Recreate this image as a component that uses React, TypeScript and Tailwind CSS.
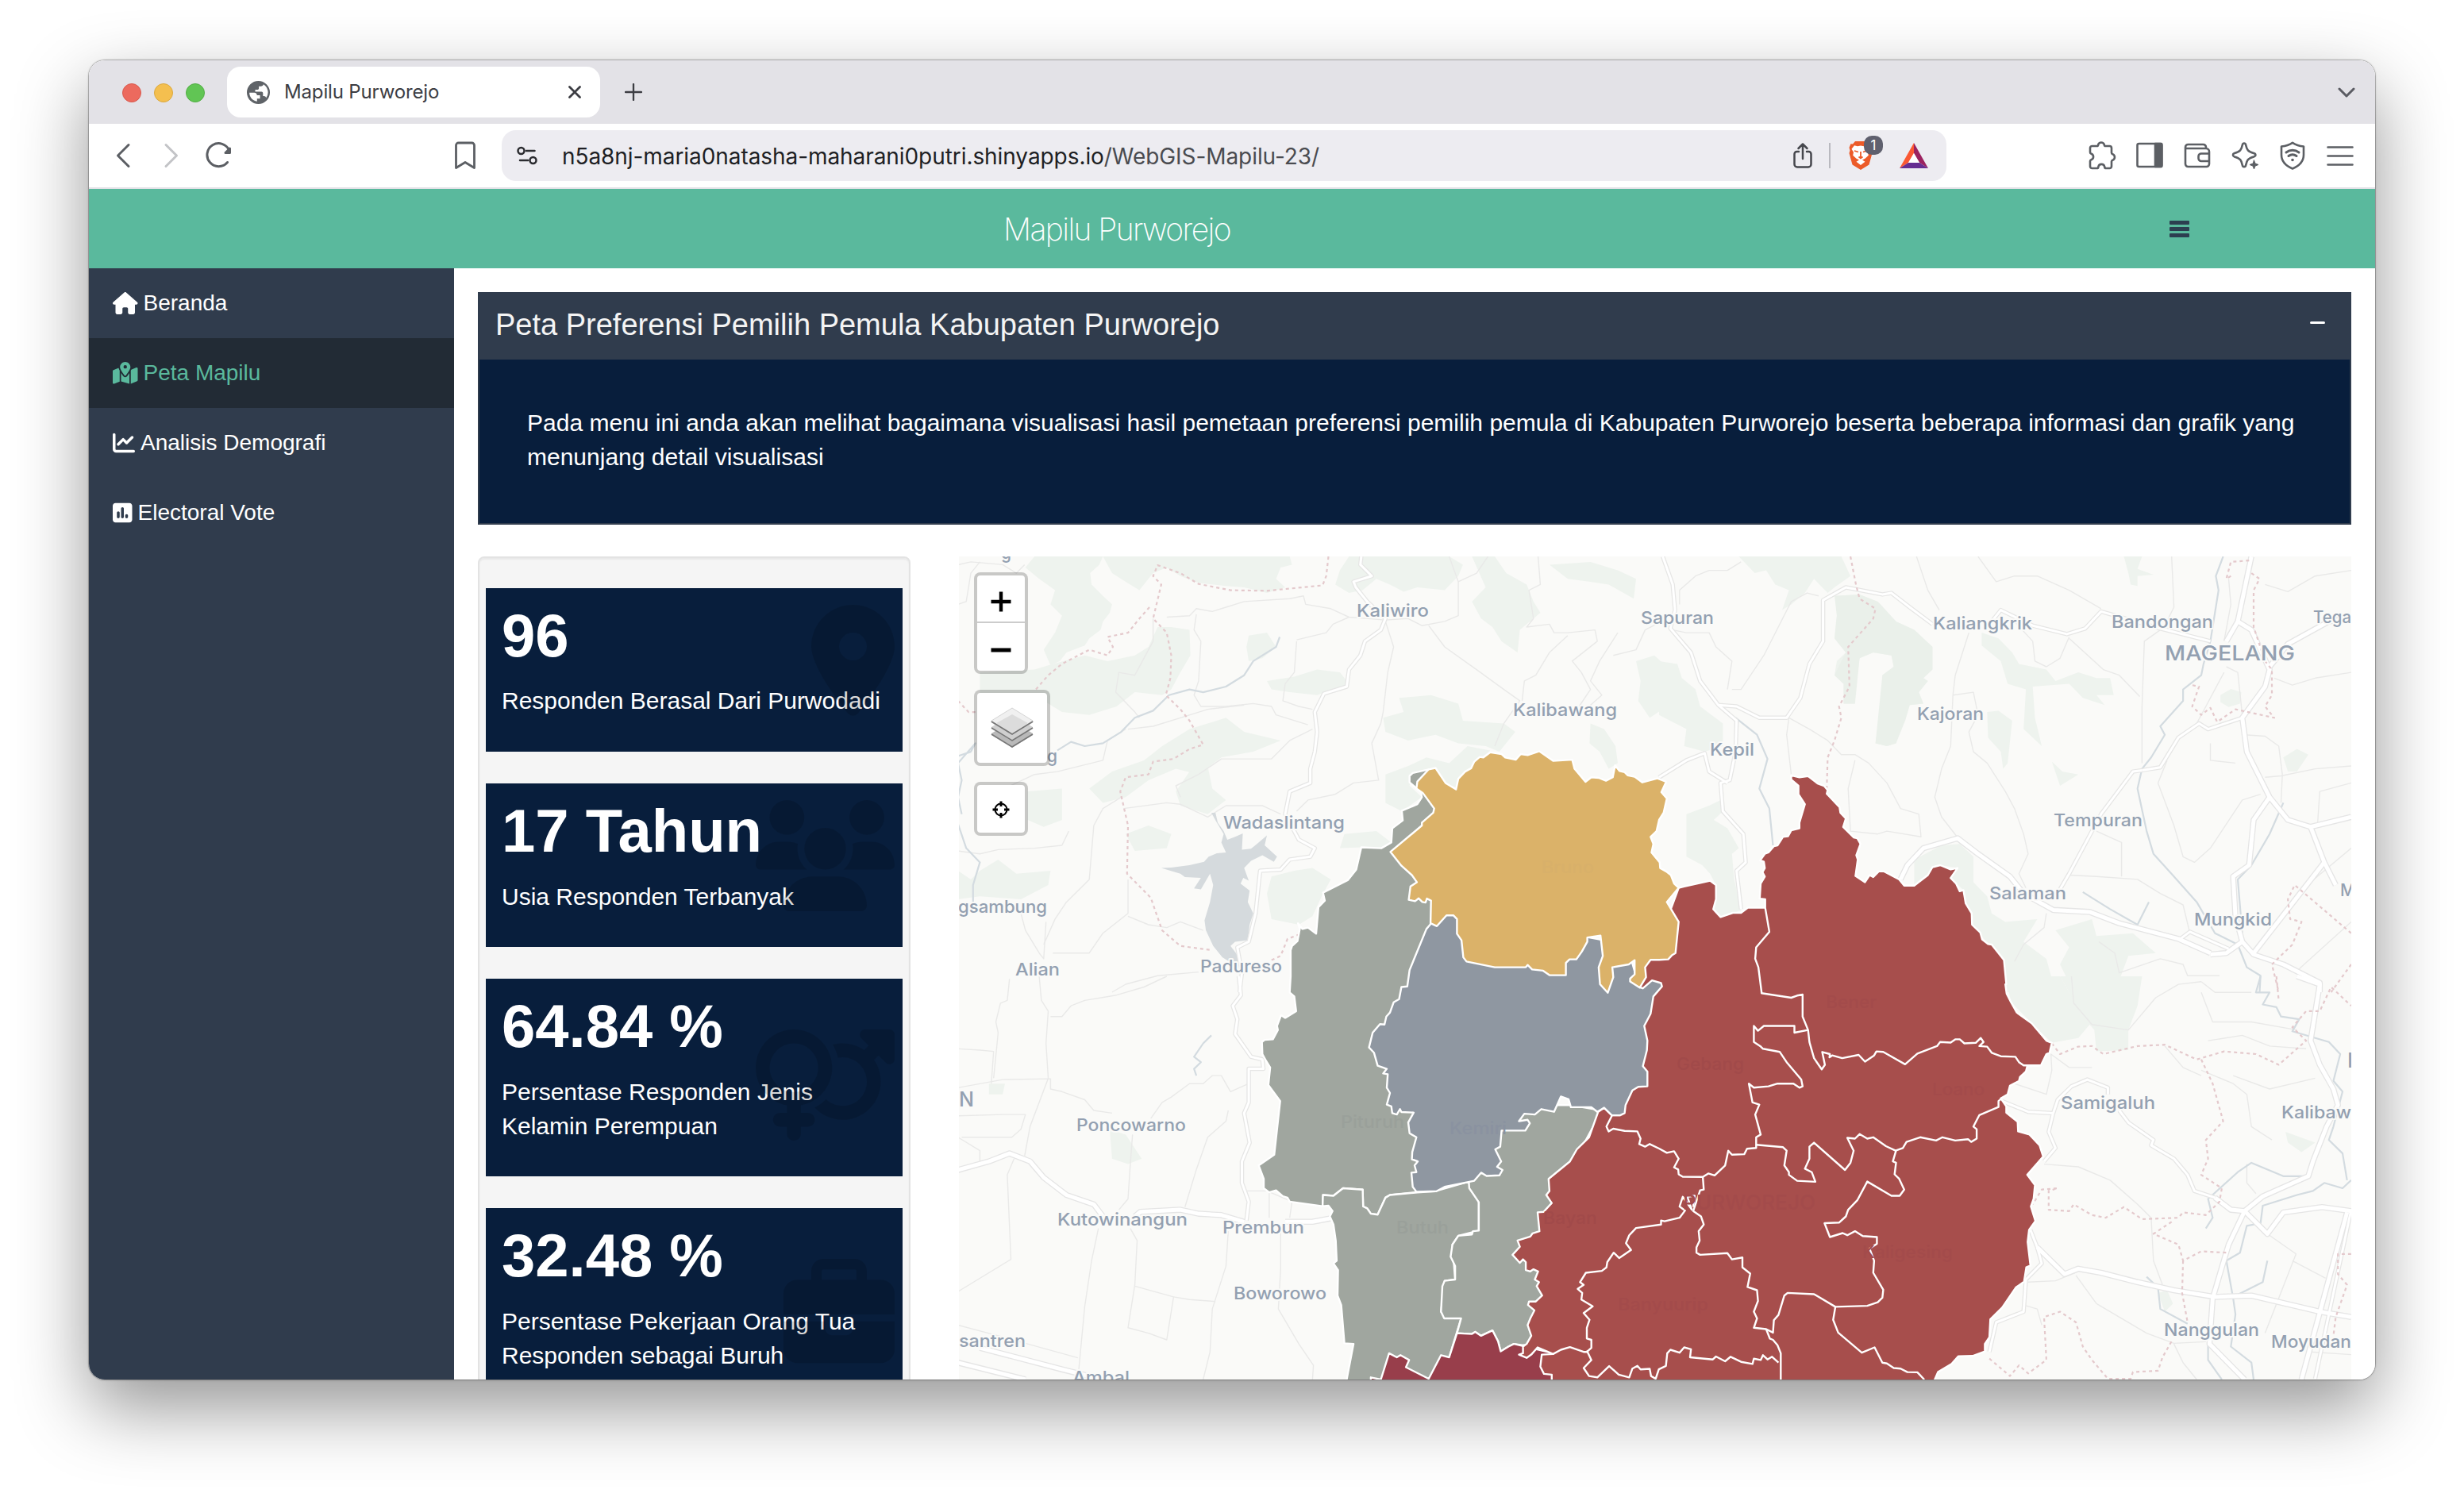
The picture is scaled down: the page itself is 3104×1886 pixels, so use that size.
import React from "react";
import { FaHouse, FaMapLocationDot, FaChartLine, FaSquarePollVertical, FaLocationDot, FaUsers, FaVenusMars, FaBriefcase } from "react-icons/fa6";

/* ---------- map geometry ---------- */

// Each sheet of the map has its own origin and unit size.
const SHEETS: Record<string, [number, number, number, number]> = {
  a: [1200, 690, 900 / 1568, 560 / 1568],
  b: [2090, 690, 900 / 1568, 560 / 1568],
  c: [1200, 1230, 900 / 1568, 530 / 1568],
  d: [2090, 1230, 900 / 1568, 530 / 1568],
};

function pts(src: string): string {
  let s = SHEETS.a;
  const out: string[] = [];
  for (const tok of src.trim().split(/\s+/)) {
    if (SHEETS[tok]) {
      s = SHEETS[tok];
      continue;
    }
    const [x, y] = tok.split(",").map(Number);
    out.push(`${(s[0] + x * s[2]).toFixed(1)},${(s[1] + y * s[3]).toFixed(1)}`);
  }
  return out.join(" ");
}

const FOREST = [
  "a 180,31 330,31 322,60 302,90 305,130 330,170 350,200 345,230 330,260 325,290 300,320 290,345 250,370 235,400 215,415 200,360 225,300 240,240 215,200 225,150 190,110 160,70",
  "a 330,31 740,31 745,60 720,70 710,110 730,140 690,160 640,140 600,135 540,125 500,100 470,70 440,90 410,150 380,120 350,90",
  "a 870,31 1090,31 1120,60 1110,100 1080,150 1020,140 990,155 960,130 930,110 900,150 870,160 840,130 850,80",
  "a 1140,31 1190,31 1215,90 1260,130 1275,190 1290,230 1245,290 1240,370 1205,330 1185,280 1160,250 1140,190 1170,140",
  "a 1310,60 1400,50 1460,80 1500,110 1495,180 1440,130 1400,120 1350,110",
  "a 480,280 520,290 522,380 500,440 480,500 460,520 400,510 360,560 300,590 240,580 180,520 60,520 60,440 180,430 220,410 290,380 340,400 400,380 430,350 450,280",
  "a 650,310 690,300 710,350 680,390 650,400 645,350",
  "a 690,470 750,455 800,430 850,440 870,480 800,520 740,510 700,500",
  "a 520,640 600,600 640,650 720,680 660,720 590,740 540,800 490,780 430,820 380,880 330,900 300,850 350,790 420,750 460,700",
  "a 520,790 560,770 570,850 600,890 560,940 500,910 490,860",
  "a 980,530 1050,520 1110,550 1120,610 1210,620 1235,650 1200,720 1170,700 1110,690 1060,660 1000,680 950,650 945,600 990,580",
  "a 950,800 1000,770 1040,740 1090,760 1130,700 1180,715 1140,770 1110,850 1080,830 1058,777 1010,800 1003,840 1030,880 986,930 950,900",
  "a 1400,620 1430,640 1455,700 1460,760 1440,780 1420,720 1398,690",
  "a 1500,400 1540,380 1568,420 1568,560 1530,600 1505,540 1510,470",
  "a 165,860 240,850 240,960 200,985 165,960",
  "a 380,1010 430,980 480,1010 470,1060 400,1070",
  "a 60,1140 100,1100 140,1150 215,1140 210,1190 150,1240 60,1230 12,1240 12,1140 40,1170",
  "a 700,1160 750,1140 790,1130 830,1170 810,1230 790,1300 760,1330 700,1310 690,1220",
  "a 860,1010 930,1000 963,1040 941,1060 897,1057 850,1060",
  "b 175,31 400,31 420,100 385,140 370,160 340,110 320,160 290,200 270,220 285,150 255,130 235,80 210,90",
  "b 385,170 440,165 480,190 520,260 560,290 600,350 600,430 580,460 590,470 570,510 580,550 550,555 540,610 520,640 520,690 500,700 475,690 480,640 500,600 490,450 515,420 510,380 470,370 440,390 430,500 430,550 405,550 405,480 385,450 390,400 410,370 385,320 390,240 410,220",
  "b 708,300 745,320 775,370 790,410 850,430 870,470 920,440 960,460 990,460 998,520 960,520 978,555 930,530 900,480 820,490 825,600 840,700 820,670 800,640 805,500 765,480 750,400 708,345",
  "b 720,580 745,575 775,610 765,760 755,780 750,720 722,670",
  "b 862,755 885,790 920,800 880,840",
  "b 1020,31 1060,31 1050,75 1085,95 1050,100 1050,135 1035,130 1030,90",
  "b 1232,520 1255,498 1278,510 1275,550 1250,562 1232,545",
  "b 0,400 40,410 50,460 80,500 90,560 140,620 140,700 100,720 55,700 60,640 0,590",
  "b 60,940 110,910 135,890 140,930 120,960 150,990 175,1060 160,1080 165,1170 180,1280 135,1303 119,1275 125,1190 112,1150 95,1120 60,1090",
  "b 560,1100 620,1050 660,1045 690,1090 690,1180 720,1230 730,1290 760,1320 830,1310 800,1390 850,1450 870,1568 762,1568 757,1455 722,1398 687,1330 668,1208 640,1165 655,1130 617,1120 590,1155 560,1190",
  "b 870,1350 950,1310 960,1370 1040,1360 1090,1430 1030,1440 1000,1568 910,1568 880,1470 900,1410",
  "d 762,0 880,0 900,60 940,140 950,170 920,230 862,248 818,175 772,95",
  "d 880,0 1060,0 1050,110 1030,200 1030,275 960,280 955,200 930,150 900,60",
  "d 1375,580 1440,620 1410,655 1380,620",
  "d 1095,1180 1115,1170 1128,1220 1110,1250",
  "b 1370,740 1400,710 1425,730 1400,790 1380,790",
  "c 345,570 380,590 415,680 385,700 350,680",
  "c 80,400 115,400 110,440 80,440",
];

const MINOR = [
  "a 12,60 40,50 110,60 140,90 158,60",
  "a 12,200 30,190 40,90 60,50",
  "a 470,245 520,240 535,215 570,225 600,210 640,190 740,180 770,170 775,200 830,215 870,245 950,255",
  "a 535,235 530,290 545,330 540,470 530,520 545,560 600,560 660,550 700,560 710,590 780,625",
  "a 440,250 440,330 400,450 365,440 358,510 400,580 410,600",
  "a 385,640 440,630 500,600 560,570 640,555",
  "a 950,260 968,350 955,440 945,580 940,620 920,690 935,820 880,830 840,870 780,890 755,930",
  "a 1045,275 1080,350 1150,430 1210,500 1245,540 1210,620 1190,700",
  "a 950,255 1000,250 1030,275 1080,260 1110,240 1110,120 1090,31",
  "a 755,330 750,440 730,480 725,540 760,560 790,570",
  "a 755,325 820,300 835,270 870,245",
  "a 1110,120 1150,90 1175,31",
  "a 1285,31 1290,130 1265,150 1275,250 1260,280 1310,270 1320,300 1350,300 1410,290 1415,330 1360,400 1380,440 1400,500 1375,560",
  "a 1250,540 1255,470 1280,450 1310,370 1350,310",
  "a 1460,300 1420,400 1400,470 1425,520 1390,570",
  "a 1568,250 1520,290 1500,360 1450,380",
  "a 375,920 470,900 500,905 560,950 600,910 680,910 720,940",
  "a 12,1070 60,1080 100,1065 180,1060 240,1050 255,1000",
  "a 370,880 330,920 310,980 300,1170 250,1250 225,1310 200,1400",
  "a 150,1290 160,1350 190,1430 200,1450 205,1320",
  "a 385,1170 385,1290 330,1360 300,1430 220,1430",
  "a 385,1300 430,1330 470,1340 500,1320 550,1350",
  "a 60,890 180,800 230,790 330,750 340,680 380,640",
  "a 500,880 490,840 540,800 590,745 650,745 700,745 740,680 790,640",
  "a 350,1568 380,1540 450,1510 540,1497",
  "c 12,270 60,275 90,280 85,400",
  "c 90,380 100,210 95,170 105,100 120,90 125,10",
  "c 190,0 195,90 210,130 205,250 210,380 170,560 158,670",
  "c 12,415 110,385 215,382 215,420 240,430 290,460 310,500 350,510",
  "c 215,150 240,150 260,110 290,90 360,70 420,40 470,0",
  "c 12,520 110,515 160,515 150,570 130,600 20,600",
  "c 12,600 60,650 60,695",
  "c 435,530 460,470 480,450 520,400 550,400 570,370 590,370 610,430 650,400",
  "c 395,590 390,700 385,830 365,870",
  "c 135,680 120,740 128,1055 12,1175",
  "c 605,500 600,540 560,600 535,720 510,860",
  "c 320,940 305,1060 290,1230 275,1503",
  "c 390,940 405,985 400,1150 385,1310 430,1330 470,1355 485,1195 400,1155",
  "c 605,950 600,1080 570,1240 565,1400 550,1503",
  "c 485,1195 520,1205 577,1212",
  "c 720,940 720,1090 715,1240 760,1370 792,1450 790,1503",
  "c 12,1300 100,1340 275,1422",
  "c 695,800 695,900",
  "c 645,800 690,800 745,840 740,900",
  "b 160,500 180,500 230,380 290,190 325,160 350,170",
  "b 45,200 45,150 80,100 110,80 150,80 180,50",
  "b 30,290 60,300 110,300 125,350 160,400 150,500",
  "b 565,31 590,150 615,220",
  "b 700,31 740,120 780,100 830,100 900,150 970,215",
  "b 680,300 650,450 645,520 640,700 620,780 605,880 620,950 655,1022",
  "b 645,520 690,510 700,590 680,650 690,720 720,760 760,860 780,920 800,1010 810,1080 790,1150 805,1200",
  "b 780,260 820,330 825,400 850,420 880,390 900,315",
  "b 900,320 975,430 1010,450 1055,525",
  "b 1060,760 1060,560 1065,330 1100,290",
  "b 1125,31 1130,210 1105,290",
  "b 285,600 330,640 370,680 400,730 430,730 460,760 500,830 530,920 570,940 575,1020 500,1000 480,1010 420,1000 415,850 430,750",
  "b 285,600 280,660 290,800",
  "b 960,1000 1015,1040 1015,1160",
  "b 900,1155 960,1160 1050,1170 1100,1220 1150,1260 1165,1360",
  "b 1115,750 1095,830 1130,980 1150,1090 1175,1110 1210,1060 1280,890 1320,870",
  "b 1210,690 1210,750 1265,760",
  "b 1280,600 1285,660 1330,665 1360,700 1368,800 1365,900",
  "b 1330,810 1365,805 1440,780 1519,770",
  "b 1519,830 1450,860 1445,980",
  "b 1519,80 1440,100 1380,155 1330,130",
  "b 1519,440 1440,460 1390,485 1350,460",
  "b 1240,440 1200,560 1180,620",
  "b 1245,420 1270,440 1280,590",
  "b 1250,110 1255,200 1240,330",
  "b 1519,1060 1400,1220",
  "b 1395,1500 1519,1320",
  "b 850,1290 845,1340 800,1400 780,1460",
  "b 965,1390 1000,1430 1010,1500 1100,1450 1150,1470 1160,1510 1230,1510",
  "d 905,0 910,100 950,180 1030,200 1090,80 1140,30 1190,20",
  "d 1190,20 1220,60 1300,60",
  "d 1190,60 1215,170 1300,170 1400,200",
  "d 1205,240 1280,220 1340,260 1420,270",
  "d 1110,260 1150,340 1190,370",
  "d 1190,350 1260,400 1290,440 1300,560 1345,610",
  "d 1260,370 1340,420 1440,380",
  "d 845,700 920,710 990,760 1050,850 1080,900 1085,1060 1105,1150",
  "d 1290,700 1290,770 1310,810",
  "d 1335,960 1398,1035 1330,1330",
  "d 1390,1060 1463,1125",
  "d 915,1115 960,1220 1070,1330 1130,1368 1200,1362",
  "d 810,1140 870,1135 920,1100",
  "d 800,1225 830,1240 840,1300",
  "d 1430,1400 1519,1410",
  "d 1130,1370 1150,1440 1180,1503",
  "d 780,400 850,440 862,350 860,290 900,340 950,340",
];

const MAJOR = [
  "a 897,31 895,60 920,100 880,120 885,140 910,190 950,250 940,290 905,330 895,380 870,430 865,490 815,515 795,580 800,650 795,720 785,780 785,830 740,860 730,940 760,1030 795,1060 785,1090 740,1100 720,1135 675,1140 665,1290 650,1390 625,1410 635,1500 630,1568",
  "c 628,0 633,70 615,110 625,160 620,215 655,300 680,310 682,345 650,345 650,470 640,510 652,620 635,690 635,770 650,840 645,910",
  "b 8,31 30,130 35,220 25,285 70,370 90,470 130,555 170,610 168,720 155,820 135,830 140,930 185,1010 190,1110 170,1140 180,1275",
  "b 130,555 170,560 220,600 280,600 310,530 330,410 360,330 360,185 410,140 490,165 510,160 550,210 600,270",
  "b 0,810 60,750 100,725 110,790 150,830",
  "b 730,260 750,220 820,275 895,305 935,285 970,225 1100,285 1210,330",
  "b 1060,785 1040,790 970,940 900,1150 880,1205",
  "b 1280,600 1205,640 1185,620 1140,670 1100,775 1060,785",
  "b 1140,1385 1165,1355 1250,1415",
  "d 745,460 810,505 865,510 855,580 870,640 845,690",
  "d 865,510 875,460 905,410 940,385 985,415 985,440",
  "d 1010,500 1030,545 1085,610 1080,630 1130,680 1160,740 1175,800 1220,825",
  "d 815,945 830,1010 840,1070 805,1130 800,1250 740,1290 725,1400",
  "d 1519,870 1440,1500",
];

const HIGHWAY = [
  "b 1300,31 1270,260 1245,330",
  "b 1270,260 1300,290 1340,430 1330,490 1280,600 1290,720 1340,880 1380,960 1430,985 1519,950",
  "b 1430,985 1460,1110 1485,1190",
  "b 1340,880 1305,960 1295,1120 1260,1160 1265,1300 1280,1390 1245,1430 1210,1435",
  "b 1460,1110 1305,1430",
  "b 530,1170 545,1120 580,1060 655,1025 700,1080 770,1160 800,1220 865,1278 945,1285 1010,1325 1140,1380 1210,1430",
  "b 1280,1390 1305,1435 1370,1470 1450,1535 1450,1568",
  "b 1519,250 1470,260 1380,340 1340,420",
  "d 1400,0 1450,30 1430,240 1450,330 1480,420 1490,480 1465,560 1435,690 1425,745 1325,820 1285,875 1255,870 1220,825",
  "d 1285,875 1250,1000 1215,1200 1208,1370 1285,1503",
  "d 1285,875 1335,960 1370,880 1455,860 1519,875",
  "d 830,1010 890,1110 920,1090 970,1105 1050,1140 1130,1170 1220,1195 1300,1190 1450,1250 1519,1270",
  "d 1510,880 1410,1503",
  "c 12,722 80,690 125,660 170,690 200,750 250,815 310,850 330,895",
  "c 400,895 412,878 500,870 540,885 590,890 640,915",
  "c 730,915 790,915 830,902",
  "c 12,1440 160,1503",
  "c 60,1385 240,1465 330,1503",
];

const RIVER = [
  "a 718,315 710,350 660,400 640,450 600,490 550,510 520,500 475,520 440,575 400,600 370,650 330,690 290,700 260,685 230,715",
  "a 12,735 40,720 50,690 12,760 20,820 12,880 20,940",
  "a 12,975 30,1060 60,1110 45,1190 45,1250",
  "c 568,220 550,250 530,300 545,320 530,345 535,370",
  "b 168,600 215,660 238,745 220,850 242,920 250,1050",
  "b 1238,31 1222,100 1228,150 1210,330 1195,410 1190,450 1150,500 1150,540 1100,630 1110,660 1080,740 1060,780 1050,850 1070,1000 1085,1080 1130,1160 1180,1250 1220,1360 1270,1400 1290,1480 1320,1510 1318,1568",
  "b 930,1215 950,1235 990,1275 1050,1330 1075,1250",
  "b 1370,900 1340,1010 1300,1120 1270,1170 1280,1360",
  "d 1320,0 1310,60 1340,60 1325,105 1355,115 1365,150 1405,160 1390,205 1470,245 1495,290 1480,390 1500,430 1480,560 1470,610 1500,660 1510,760",
  "d 1519,760 1500,790 1460,770 1435,800 1400,815 1325,855 1320,920 1290,930 1275,1030 1245,1060 1260,1200 1265,1260 1255,1380 1300,1440 1305,1503",
  "d 1200,940 1215,900 1205,830 1270,730 1300,695 1370,745 1420,745",
  "d 1335,1060 1325,1140 1260,1195",
  "d 1070,1120 1095,1160 1100,1240 1160,1295",
  "d 1205,1370 1205,1430 1235,1503",
];

const BORDER = [
  "a 825,31 820,100 812,133 690,152 610,150 540,128 500,90 450,62 440,100 458,130 440,250 470,300 480,380 478,460 468,520 500,570 520,610 550,695 520,710 485,745 440,755 430,800 380,810 368,860 385,980 383,1150 435,1235 460,1350 500,1405 570,1420",
  "a 432,210 410,250 385,300 340,315 352,350 340,380 300,360 240,410 210,450 180,505",
  "a 12,540 35,580 60,580",
  "a 700,1455 720,1440 735,1380 760,1365",
  "b 420,31 432,130 440,180 475,215 470,250 415,350 418,490 395,560 400,600 385,680 370,740 368,850",
  "b 1295,45 1255,50 1245,110 1260,95",
  "b 1300,90 1318,110 1305,150 1305,280 1330,400 1345,430 1345,520 1330,560 1350,600 1265,570 1225,615 1210,565 1190,590 1170,560 1185,490 1170,485",
  "b 1519,1360 1395,1190 1380,1240 1385,1310 1410,1320 1390,1400 1345,1470 1360,1568",
  "b 1519,1470 1475,1568",
  "d 862,250 880,290 920,262 950,260 975,290 1050,260 1110,255 1180,310 1240,280 1310,290 1360,330 1420,240 1390,190 1420,130 1450,130 1475,40 1519,110",
  "d 1355,0 1360,90",
  "d 1190,310 1215,400 1238,540 1200,610 1205,680 1190,740 1235,790 1230,840 1200,890 1150,880 1140,900 1060,905 1020,860 980,900 950,890 910,850 900,875 855,870 855,800 875,790 840,795 820,850",
  "d 1125,915 1085,960 1140,1000 1150,1060 1190,1025 1245,1030",
  "d 1150,1060 1148,1180 1160,1290",
  "d 1519,1035 1490,1035 1490,1110 1510,1150 1485,1270 1480,1340",
  "d 725,1425 770,1490 790,1450 810,1480 850,1430 845,1270 880,1250 915,1290 930,1380 950,1430 985,1500 1035,1500 1040,1475 1095,1470 1105,1420 1125,1360",
];

const LAKE = "a 568,935 577,935 582,970 595,1000 603,1030 620,1020 637,1008 635,1065 655,1062 668,1045 690,1015 685,1050 712,1090 705,1108 680,1085 655,1105 640,1130 650,1175 638,1165 632,1185 652,1210 648,1250 660,1290 652,1330 648,1385 620,1390 610,1405 622,1430 633,1460 610,1463 592,1445 572,1405 556,1350 553,1315 565,1250 572,1190 565,1150 545,1205 530,1202 545,1165 510,1162 500,1150 478,1140 458,1130 480,1128 520,1120 552,1108 562,1090 580,1078 600,1075 590,1040 595,1010 578,965";

const RED = `b 43,1200 55,1195 112,1175 125,1190 125,1240 119,1275 135,1303 162,1288 180,1288 195,1270 233,1270
233,1240 221,1238 223,1185 232,1160 227,1145 232,1130 230,1108 222,1103 232,1080 240,1075 252,1053 260,1050 272,1020 283,1018 290,997 308,990 308,970 320,905 306,870 306,840 290,818 290,803 308,810 327,806 348,832 362,840 370,855 368,868 396,915 398,935 410,955 404,985 427,1022 435,1025 442,1045 433,1085 436,1100 431,1158 452,1180 462,1155 470,1162 482,1142 494,1142 527,1170 538,1192 560,1192 590,1155 600,1127 617,1120 640,1135 655,1130 640,1165 652,1185 660,1212 668,1208 673,1255 686,1290 687,1330 705,1358 709,1382 722,1398 730,1400 757,1455 762,1540
d 760,30 763,65 772,95 785,135 818,175 850,240 862,248 857,285 850,290 838,332 808,335 805,355 792,375 790,390 770,408 765,440 750,455 762,485 762,508 787,542 788,578 813,590 835,630 843,672 808,740 825,778 822,830 816,858 826,912 812,945 809,990 815,1078 806,1085 801,1138 783,1160 753,1235 727,1278 725,1345 715,1370 715,1398 688,1415 657,1416 642,1445 612,1475 605,1503 603,1530
c 1315,1530 1315,1485 1298,1482 1290,1455 1293,1410 1318,1408 1284,1383 1270,1410 1260,1422 1243,1410 1252,1405 1252,1380 1260,1370 1270,1340 1262,1300 1268,1275 1277,1245 1263,1225 1265,1212 1280,1212 1294,1190 1282,1155 1287,1140 1278,1130 1285,1100 1275,1092 1268,1100 1258,1095 1258,1065 1252,1055 1245,1068 1229,1038 1245,1008 1240,985 1268,970 1273,958 1288,950 1284,880 1297,878 1315,845 1303,815 1310,800 1308,755 1355,690 1370,645 1397,600 1417,505 1430,490 1447,518 1465,518 1475,480 1490,300 1500,42 a 1540,1400 b 20,1300`;

const YELLOW = `a 1060,777 1082,830 1105,853 1110,815 1125,790 1138,778 1145,755 1157,738 1165,740 1180,722 1205,728 1213,740 1236,748 1247,728 1262,732 1288,718 1318,752 1360,748 1365,780 1389,826 1402,810 1418,812 1434,822 1449,810 1454,768 1464,788 1475,792 1482,803 1497,808 1514,828 1547,814 1566,826
b 5,862 17,885 10,935 0,960 a 1545,1000 1532,1020 1538,1045 1534,1075 1552,1110 1553,1130 1566,1142 b 26,1155 33,1185 43,1200 17,1250 43,1320 36,1430 28,1438 20,1452 0,1454 a 1532,1454 1520,1480 1522,1515 1508,1552 1487,1530 1487,1520 1497,1505 1497,1455 1484,1470 1448,1480 1450,1515 1438,1570 1421,1540 1418,1480 1427,1440 1422,1368 1393,1375 1393,1390 1381,1425 1369,1452 1354,1452 1346,1465 1346,1508 1310,1508 1296,1492 1272,1488 1262,1472 1258,1480 1190,1480 1128,1460 1121,1445 1117,1385 1107,1362 1107,1310 1099,1297 1084,1297 1063,1335 1049,1325 1050,1245 1041,1238 1038,1252 1031,1250 1023,1237 1015,1247 1001,1242 1005,1195 1019,1180 1008,1155 985,1122 961,1073 1030,980 1030,970 1055,935 1057,920 1032,865 1018,850 1020,825 1045,782`;

const DISTRICTS: { fill: string; d: string }[] = [
  {
    fill: "#a0a69f",
    d: `a 1045,782 1010,795 1003,805 1003,828 1028,862 1030,880 1020,905 986,928 988,962 965,990 963,1040 941,1060 897,1057 886,1135 868,1172 813,1217 817,1245 803,1268 798,1362 780,1340 768,1345 758,1325 762,1345 757,1388 745,1405 742,1420 742,1512
c 742,0 740,60 750,75 754,130 730,155 721,145 712,185 714,200 703,235 685,237 679,245 680,290 688,315 697,340 693,405 719,465 706,665 672,705 683,755 683,790 695,805 710,798 725,820 735,825 740,840 812,857 813,815 836,818 857,790 900,795 901,858 910,865 918,885 933,888 950,825 960,815 1040,801 1040,300 a 1049,1325 1100,1100 1060,850`,
  },
  {
    fill: "#a0a69f",
    d: `c 812,857 825,855 834,875 828,895 836,925 841,985 843,1060 836,1070 846,1095 845,1190 853,1225 860,1368 880,1370 865,1503 862,1520 1040,1520 1090,1420 1116,1275 1072,1250 1080,1135 1103,1130 1097,1000 1110,967 1155,948 1155,842 1133,765 1060,801 1020,806 960,815 950,825 933,888 918,885 910,865 901,858 900,795 857,790 836,818 813,815`,
  },
  {
    fill: "#a0a69f",
    d: `c 1133,765 1134,790 1155,842 1155,948 1142,950 1140,962 1110,967 1097,1000 1093,1045 1103,1080 1103,1130 1080,1135 1075,1155 1072,1250 1079,1275 1116,1275 1107,1330 1140,1333 1147,1325 1160,1340 1185,1320 1197,1360 1203,1398 1220,1380 1232,1370 1250,1375 1300,1370 1330,1200 1330,800 1425,500 1357,480 1280,480 1190,560 1160,700`,
  },
  {
    fill: "#983e4b",
    d: `c 918,1520 918,1495 940,1503 958,1405 975,1420 983,1412 1002,1430 995,1457 1045,1500 1072,1412 1090,1420 1107,1330 1140,1333 1147,1325 1160,1340 1185,1320 1197,1360 1203,1398 1220,1380 1232,1370 1258,1380 1330,1410 1330,1520`,
  },
  { fill: "#a74e4c", d: RED },
  {
    fill: "#8f97a1",
    d: `c 1018,803 1010,785 1007,732 1018,730 1014,705 1021,690 1008,682 1009,655 1018,600 1003,585 1000,545 1012,508 985,506 982,495 975,515 965,510 963,485 953,478 960,435 953,415 955,365 945,362 953,345 933,333 925,285 914,265 922,210 938,178 948,180 952,150 960,135 968,97 980,85 985,40 998,38 1001,0 a 1003,1490 1040,1345 1048,1330 1080,1280 1480,1400 1507,1550 c 1515,45 1535,15 1555,25 1557,38 1538,75 1532,140 1518,185 1525,240 1524,275 1515,335 1525,355 1525,410 1505,412 1492,425 1477,480 1475,510 1465,518 1447,518 1430,490 1415,505 1402,488 1357,488 1352,458 1335,448 1320,505 1292,495 1278,515 1255,512 1243,540 1262,535 1267,548 1257,575 1205,575 1202,635 1191,645 1204,690 1195,710 1207,722 1200,742 1172,744 1160,732 1145,762 1080,785 1062,801`,
  },
  { fill: "#dbb269", d: YELLOW },
];

const INNER = [
  "b 233,1270 242,1355 213,1410 211,1450 218,1480 225,1568 d 225,63 290,80 303,72 315,68 315,150 327,200 330,245 340,305 357,347 364,330 358,282 375,290 374,302 380,295 402,305 438,293 452,318 472,295 477,280 492,282 540,328 567,288 610,260 617,245 640,247 650,235 660,235 670,250 695,248 706,230 712,245 703,260 720,262 730,285 750,298 782,300 790,320 800,332 838,332",
  "d 327,200 297,210 297,185 230,185 217,203 208,185 208,245 222,260 228,270 265,282 280,320 312,385 315,410 308,415 295,400 260,400 240,410 208,415 197,400 205,470 220,478 211,515 223,590 213,600 213,640 193,643 187,663 160,665 152,650 145,705 122,742 108,735 96,748 52,747 43,738 42,720 33,712 43,680 33,652 17,658 0,642 c 1530,625 1520,635 1507,625 1510,605 1503,578 1475,576 1450,568 1440,578 1435,560 1447,520",
  "d 213,628 272,637 280,650 275,705 285,730 285,740 303,762 343,766 335,730 320,717 330,680 330,635 340,620 408,722 420,695 427,650 413,602 430,605 440,588 457,605 470,600 498,633 519,650 535,640 543,617 573,600 608,612 622,600 650,612 678,607 685,617 697,605 697,570 690,560 703,517 745,487 745,465 752,455",
  "d 96,748 98,795 90,798 75,875 92,895 98,925 87,950 89,985 82,1010 82,1030 90,1038 150,1032 160,1055 183,1048 183,1085 200,1108 194,1158 215,1170 217,1210 208,1250 215,1275 208,1310 235,1315 250,1328 252,1282 262,1262 275,1190 282,1180 340,1185 387,1232 457,1228 480,1215 490,1198 492,1168 470,1105 472,1060 462,1015 478,997 478,972 447,968 430,950 413,965 403,957 375,972 363,920 395,918 410,895 415,870 435,835 457,765 510,818 528,818 538,795 527,755 517,738 520,695 513,690 520,650",
  "d 387,1232 382,1280 393,1328 445,1403 473,1383 490,1440 500,1443 515,1460 530,1462 545,1475 567,1476 582,1503",
  "d 235,1315 243,1350 250,1355 260,1375 267,1405 267,1510",
  "c 1318,1408 1335,1392 1355,1382 1385,1400 1392,1400 1402,1385 1402,1355 1392,1350 1392,1310 1398,1280 1385,1255 1405,1230 1380,1205 1382,1180 1372,1165 1385,1150 1377,1140 1390,1105 1425,1098 1435,1085 1437,1065 1451,1030 1463,1050 1489,1020 1478,995 1485,965 1500,938 1555,925 1555,910 d 12,913 45,900 57,873 45,858 52,822 72,870 62,822 78,818 75,860",
  "c 1392,1395 1402,1430 1385,1460 1397,1490 1415,1495 1441,1453 1462,1485 1485,1495 1492,1462 1503,1452 1510,1465 1530,1463 1533,1490 1543,1500 1550,1465 d 15,1452 18,1405 25,1392 45,1403 55,1383 70,1390 68,1420 118,1428 125,1417 145,1435 157,1418 180,1437 205,1445 208,1425 223,1430 228,1412 238,1428 248,1418 262,1440",
];

/* [text, left x, baseline y, width] */
const PLACES: [string, number, number, number][] = [
  ["Kaliwiro", 1709, 777, 91],
  ["Sapuran", 2067, 786, 92],
  ["Kaliangkrik", 2435, 793, 125],
  ["Bandongan", 2660, 791, 128],
  ["Tega", 2914, 785, 48],
  ["Kalibawang", 1906, 902, 131],
  ["Kajoran", 2415, 907, 84],
  ["Kepil", 2154, 952, 56],
  ["Wadaslintang", 1541, 1044, 153],
  ["Tempuran", 2587, 1041, 112],
  ["Salaman", 2506, 1133, 97],
  ["Mungkid", 2764, 1166, 98],
  ["M", 2948, 1129, 19],
  ["gsambung", 1207, 1150, 112],
  ["g", 1319, 960, 13],
  ["g", 1261, 704, 13],
  ["Alian", 1279, 1229, 56],
  ["Padureso", 1512, 1225, 103],
  ["Samigaluh", 2596, 1397, 119],
  ["Kalibaw", 2874, 1409, 88],
  ["Poncowarno", 1356, 1425, 138],
  ["Kutowinangun", 1332, 1544, 164],
  ["Prembun", 1540, 1554, 103],
  ["Boworowo", 1554, 1637, 117],
  ["santren", 1208, 1697, 84],
  ["Nanggulan", 2726, 1683, 120],
  ["Moyudan", 2861, 1698, 101],
  ["Ambal", 1351, 1743, 72],
];

/* Names that show faintly through the district fills. */
const FAINT: [string, number, number, number, string][] = [
  ["Bruno", 1942, 1100, 66, "#d8b06a"],
  ["Pituruh", 1689, 1421, 80, "#9aa09a"],
  ["Kemiri", 1826, 1429, 72, "#8a92a0"],
  ["Butuh", 1759, 1554, 66, "#9aa09a"],
  ["Bayan", 1944, 1542, 68, "#a14a4a"],
  ["Banyuurip", 2038, 1651, 114, "#a34b4b"],
  ["Bener", 2300, 1270, 64, "#a34b4b"],
  ["Gebang", 2112, 1348, 85, "#a14a4a"],
  ["Loano", 2434, 1380, 66, "#a34b4b"],
  ["Kaligesing", 2346, 1585, 114, "#a34b4b"],
];

function Label({ t, x, y, w, color = "#93a0b1", size = 22 }: { t: string; x: number; y: number; w?: number; color?: string; size?: number }) {
  return (
    <text x={x} y={y} fontSize={size} fontWeight={500} fill={color} textLength={w} lengthAdjust="spacingAndGlyphs" fontFamily='Inter, "Open Sans", sans-serif'>
      {t}
    </text>
  );
}

function BaseMap() {
  return (
    <svg viewBox="1208 701 1754 1037" className="block h-[1037px] w-[1754px] bg-[#fafaf8]" fill="none" strokeLinejoin="round">
      {FOREST.map((s, i) => (
        <polygon key={i} points={pts(s)} fill="#eef3ee" />
      ))}
      <polygon points={pts("b 385,170 440,165 480,190 520,260 560,290 600,350 600,430 580,460 590,470 570,510 580,550 550,555 540,610 520,690 500,700 475,690 490,450 515,420 510,380 470,370 440,390 430,550 405,550 405,480 385,450 410,370 385,320 390,240")} fill="#eaf0ea" />
      {MINOR.map((s, i) => (
        <polyline key={i} points={pts(s)} stroke="#e9e9e8" strokeWidth={1.4} />
      ))}
      <polygon points={pts(LAKE)} fill="#d5dadd" />
      {RIVER.map((s, i) => (
        <polyline key={i} points={pts(s)} stroke="#d3dbe0" strokeWidth={2.2} />
      ))}
      {MAJOR.map((s, i) => (
        <polyline key={i} points={pts(s)} stroke="#e6e6e5" strokeWidth={5.5} />
      ))}
      {HIGHWAY.map((s, i) => (
        <polyline key={i} points={pts(s)} stroke="#e5e5e5" strokeWidth={7.6} />
      ))}
      {MAJOR.map((s, i) => (
        <polyline key={i} points={pts(s)} stroke="#ffffff" strokeWidth={3} />
      ))}
      {HIGHWAY.map((s, i) => (
        <polyline key={i} points={pts(s)} stroke="#ffffff" strokeWidth={5} />
      ))}
      {BORDER.map((s, i) => (
        <polyline key={i} points={pts(s)} stroke="#e4c9cc" strokeWidth={2.2} strokeDasharray="4 4" />
      ))}
      <g stroke="#fafaf8" strokeWidth={4} paintOrder="stroke">
        {PLACES.map(([t, x, y, w], i) => (
          <Label key={i} t={t} x={x} y={y} w={w} />
        ))}
        <Label t="MAGELANG" x={2727} y={832} w={164} size={26} />
        <Label t="N" x={1208} y={1394} w={19} size={26} />
        <Label t="I" x={2957} y={1345} size={26} />
      </g>
      {DISTRICTS.map((p, i) => (
        <polygon key={i} points={pts(p.d)} fill={p.fill} stroke="#ffffff" strokeWidth={2.4} />
      ))}
      {INNER.map((s, i) => (
        <polyline key={i} points={pts(s)} stroke="#ffffff" strokeWidth={2.4} />
      ))}
      {FAINT.map(([t, x, y, w, c]) => (
        <Label key={t} t={t} x={x} y={y} w={w} color={c} />
      ))}
      <Label t="PURWOREJO" x={2120} y={1524} w={167} size={26} color="#a34b4b" />
    </svg>
  );
}

/* ---------- map controls ---------- */

function MapControls() {
  const frame = "box-border rounded-[8px] border-4 border-black/20 bg-white bg-clip-padding flex";
  return (
    <div className="absolute left-[19px] top-5 flex flex-col items-start gap-5">
      <div className={`${frame} h-32 w-[68px] flex-col`}>
        <div className="flex h-[60px] items-center justify-center border-b-2 border-[#ccc] pt-2">
          <svg className="h-[26px] w-[26px]" viewBox="0 0 26 26" stroke="#000" strokeWidth={4.4}>
            <path d="M0.5 13h25M13 0.5v25" />
          </svg>
        </div>
        <div className="flex h-[60px] items-center justify-center pt-2">
          <svg className="h-[26px] w-[26px]" viewBox="0 0 26 26" stroke="#000" strokeWidth={5}>
            <path d="M0.5 13h25" />
          </svg>
        </div>
      </div>
      <div className={`${frame} h-24 w-24 items-center justify-center`}>
        <svg className="h-[52px] w-[54px]" viewBox="0 0 54 52">
          <path d="M1 33 27 17l26 16v2L27 51 1 35z" fill="#b9b9b9" />
          <path d="M1 34 27 50 53 34" fill="none" stroke="#777" strokeWidth={1.6} />
          <path d="M1 25 27 9l26 16v2L27 43 1 27z" fill="#cfcfcf" />
          <path d="M1 26 27 42 53 26" fill="none" stroke="#777" strokeWidth={1.6} />
          <path d="M1 17 27 1l26 16v2L27 35 1 19z" fill="#f0f0f0" stroke="#d4d4d4" strokeWidth={1} />
          <path d="M7 20 27 9l20 11L27 33z" fill="#dcdcdc" />
          <path d="M1 18 27 34 53 18" fill="none" stroke="#777" strokeWidth={1.8} />
        </svg>
      </div>
      <div className={`${frame} h-[68px] w-[68px] items-center justify-center pt-[2px]`}>
        <svg className="h-[22px] w-[22px]" viewBox="0 0 22 22" fill="none" stroke="#000">
          <circle cx="11" cy="11" r="7.5" strokeWidth={2} />
          <path d="M11 0.5v6.5M11 15v6.5M0.5 11h6.5M15 11h6.5" strokeWidth={3} />
        </svg>
      </div>
    </div>
  );
}

/* ---------- browser frame ---------- */

function TabBar() {
  return (
    <div className="flex h-20 items-center bg-[#e3e2e7] pt-[2px]">
      <div className="ml-[42px] flex gap-4">
        <span className="h-6 w-6 rounded-full border border-[#d9594e] bg-[#ec6a5e]" />
        <span className="h-6 w-6 rounded-full border border-[#dba93f] bg-[#f4bf4f]" />
        <span className="h-6 w-6 rounded-full border border-[#52ae45] bg-[#61c554]" />
      </div>
      <div className="-mt-[2px] ml-7 flex h-16 w-[470px] items-center rounded-[17px] bg-white px-[25px]">
        <svg className="h-[29px] w-[29px]" viewBox="0 0 24 24" fill="#5f6368">
          <path d="M12 0a12 12 0 1 0 0 24 12 12 0 0 0 0-24zM2.600 12.200h5.200c1.700.1 2.600 1 2.700 2.600h3.200v3.600h-3.100v2.900c-4.400-.5-8-4.300-8-9.100zm17.500 5.300c-.4-1-1.300-1.700-2.400-1.700h-.9v-3c0-.9-.6-1.600-1.500-1.600H8.700V9.100h2.300c.8 0 1.500-.7 1.500-1.500V5.500h2.400c1.200 0 2.200-.8 2.300-1.900a9.500 9.500 0 0 1 2.900 13.900z" />
        </svg>
        <span className="ml-[18px] text-[24px] tracking-[-0.15px] text-[#3c3d43]">Mapilu Purworejo</span>
        <svg className="ml-auto mr-[-1px] h-4 w-4" viewBox="0 0 16 16" stroke="#3c3d43" strokeWidth={2.800} strokeLinecap="round">
          <path d="M1.500 1.500l13 13M14.500 1.500l-13 13" />
        </svg>
      </div>
      <svg className="-mt-[2px] ml-[31px] h-[22px] w-[22px]" viewBox="0 0 22 22" stroke="#3c3d43" strokeWidth={2.300} strokeLinecap="round">
        <path d="M11 1v20M1 11h20" />
      </svg>
      <svg className="-mt-[2px] ml-auto mr-[25px] h-[13px] w-[22px]" viewBox="0 0 22 13" fill="none" stroke="#5b5c63" strokeWidth={3} strokeLinecap="round" strokeLinejoin="round">
        <path d="M2 2l9 9 9-9" />
      </svg>
    </div>
  );
}

function ToolIcon({ children }: { children: React.ReactNode }) {
  return (
    <svg className="h-9 w-9 shrink-0" viewBox="0 0 36 36" fill="none" stroke="#5c5f64" strokeWidth={2.600} strokeLinecap="round" strokeLinejoin="round">
      {children}
    </svg>
  );
}

function Toolbar() {
  return (
    <div className="flex h-[82px] items-start border-b-2 border-[#e3e2e7] bg-white">
      <div className="flex h-20 w-[520px] items-center pl-[33px]">
        <svg className="h-8 w-[20px]" viewBox="0 0 20 32" fill="none" stroke="#5c5f64" strokeWidth={3} strokeLinecap="round" strokeLinejoin="round">
          <path d="M17 2.500 3.500 16 17 29.500" />
        </svg>
        <svg className="ml-[41px] h-8 w-[20px]" viewBox="0 0 20 32" fill="none" stroke="#c3c4c7" strokeWidth={3} strokeLinecap="round" strokeLinejoin="round">
          <path d="M3 2.500 16.500 16 3 29.500" />
        </svg>
        <svg className="ml-8 h-9 w-9" viewBox="0 0 36 36" fill="none" stroke="#5c5f64" strokeWidth={3} strokeLinecap="round">
          <path d="M28.500 26.500A14.500 14.500 0 1 1 30.800 11.500" />
          <path d="M31.500 9v5.500h-5.500z" fill="#5c5f64" strokeLinejoin="round" />
        </svg>
        <svg className="ml-auto mr-8 h-[36px] w-[28px]" viewBox="0 0 28 36" fill="none" stroke="#5c5f64" strokeWidth={2.800} strokeLinejoin="round">
          <path d="M2.500 5a3 3 0 0 1 3-3h17a3 3 0 0 1 3 3v28.500L14 26.500 2.500 33.500z" />
        </svg>
      </div>
      <div className="mt-2 flex h-16 w-[1820px] items-center rounded-[18px] bg-[#edecf1] pl-[18px] pr-[23px]">
        <svg className="h-[26px] w-[28px]" viewBox="0 0 28 26" fill="none" stroke="#2b2c30" strokeWidth={2.500} strokeLinecap="round">
          <circle cx="6.500" cy="7" r="4" />
          <path d="M13 7h10.500M5 19h10" />
          <circle cx="21.500" cy="19" r="4" />
        </svg>
        <span className="ml-[30px] whitespace-pre pt-[2px] text-[28px] tracking-[-0.07px] text-[#1e1f24]">
          n5a8nj-maria0natasha-maharani0putri.shinyapps.io<span className="text-[#4a4b50]">/WebGIS-Mapilu-23/</span>
        </span>
        <svg className="ml-auto h-[34px] w-[26px]" viewBox="0 0 26 34" fill="none" stroke="#46474d" strokeWidth={2.500} strokeLinecap="round" strokeLinejoin="round">
          <path d="M13 21V3M7.500 8 13 2.500 18.500 8M8 12H5.500a3 3 0 0 0-3 3v13a3.500 3.500 0 0 0 3.500 3.500h14a3.500 3.500 0 0 0 3.500-3.500V15a3 3 0 0 0-3-3H18" />
        </svg>
        <span className="ml-[20px] h-8 w-[2px] bg-[#b9b9bf]" />
        <div className="relative ml-[22px] h-[38px] w-[34px]">
          <svg className="h-[38px] w-[32px]" viewBox="0 0 32 38">
            <path d="M9 1h14l3 3.500 2.500-.3 2 4.800-1 3.500 1 3.500-4 14.500L16 37 5.500 30.500l-4-14.500 1-3.500-1-3.500 2-4.800 2.500.3z" fill="#ec5b29" />
            <path d="M16 6.500l4 .8 4-1 3.500 4.500-2.500 4 .8 4-4.300 4-3.500 1.700 3.500 2.300-5.500 4.200-5.500-4.200 3.500-2.300-3.500-1.700-4.300-4 .8-4-2.500-4L8 6.300l4 1z" fill="#fff" />
            <path d="M8 13l5 1.500M24 13l-5 1.500M16 14v7.500M13.500 20.500l2.500 1.800 2.500-1.800" stroke="#ec5b29" strokeWidth={1.800} fill="none" />
          </svg>
          <span className="absolute -top-[6px] left-[20px] flex h-6 w-6 items-center justify-center rounded-[10px] bg-[#5f606e] text-[17px] leading-none text-white">1</span>
        </div>
        <svg className="ml-[31px] h-[32px] w-[36px]" viewBox="0 0 36 32">
          <path d="M18 0 0 32l11-7 7-12z" fill="#fa5833" />
          <path d="M18 0l18 32-11-7-7-12z" fill="#9b2260" />
          <path d="M0 32h36l-11-7H11z" fill="#662d91" />
          <path d="M18 13l7 12H11z" fill="#fff" />
        </svg>
      </div>
      <div className="ml-auto mr-[26px] flex h-20 items-center gap-6">
        <ToolIcon>
          <path d="M3 8.500a2.500 2.500 0 0 1 2.500-2.500h6c1.500 0 1.700-.8 1.700-1.800a4 4 0 0 1 7.600 0c0 1 .2 1.800 1.700 1.800h5a2.500 2.500 0 0 1 2.500 2.500v6c0 1.300.8 1.500 1.700 1.900a4 4 0 0 1 0 7.200c-.9.4-1.700.6-1.700 1.900v6a2.500 2.500 0 0 1-2.500 2.500h-4.500c-1.600 0-1.700-1-1.800-2a4 4 0 0 0-7.800 0c-.1 1-.2 2-1.800 2H5.500A2.500 2.500 0 0 1 3 31.500v-6.500c0-1.300.8-1.500 1.600-1.800a4 4 0 0 0 0-7.400C3.800 15.500 3 15.300 3 14z" />
        </ToolIcon>
        <ToolIcon>
          <rect x="2.500" y="3" width="31" height="29" rx="2" />
          <path d="M25 3h8v29h-8z" fill="#5c5f64" />
        </ToolIcon>
        <ToolIcon>
          <path d="M3 7.500v21a3.500 3.500 0 0 0 3.500 3.500h23a3.500 3.500 0 0 0 3.500-3.500V13a4 4 0 0 0-4-4H4.500M3 7.500A3.500 3.500 0 0 1 6.500 4h19A3.500 3.500 0 0 1 29 7.500V9M33 15.500H23a3.500 3.500 0 0 0-3.500 3.500v2.500A3.500 3.500 0 0 0 23 25h10" />
        </ToolIcon>
        <ToolIcon>
          <path d="M17 2.500c1.300 0 1.900 1 2.200 2.300 1.200 6 2.600 8.300 10 10.300 2.900.8 2.900 3.500 0 4.300-7.400 2-8.800 4.500-10 10.500-.6 3-3.800 3-4.400 0-1.200-6-2.600-8.500-10-10.500-2.500-.8-2.500-3.500 0-4.300 7.400-2 8.800-4.300 10-10.300.3-1.300.9-2.300 2.200-2.300z" />
          <path d="M29.500 24l1.500 4 4 1.500-4 1.500-1.500 4-1.500-4-4-1.500 4-1.500z" fill="#5c5f64" strokeWidth={1} />
        </ToolIcon>
        <ToolIcon>
          <path d="M18 1.800c4 2.700 8.500 4.200 14 4.700v10.500c0 8-4.500 13.500-14 17.500C8.500 30.500 4 25 4 17V6.500c5.500-.5 10-2 14-4.700z" />
          <path d="M10 14c4.800-3.600 11.200-3.600 16 0M13 18.500c3-2.200 7-2.200 10 0" strokeWidth={3} />
          <circle cx="18" cy="23.500" r="1.800" fill="#5c5f64" stroke="none" />
        </ToolIcon>
        <ToolIcon>
          <path d="M2.500 7.500h31M2.500 18.500h31M2.500 29.500h31" strokeWidth={2.600} />
        </ToolIcon>
      </div>
    </div>
  );
}

/* ---------- page ---------- */

const NAV = [
  { icon: FaHouse, label: "Beranda", size: "w-[31.5px]" },
  { icon: FaMapLocationDot, label: "Peta Mapilu", size: "w-[31.5px]", active: true },
  { icon: FaChartLine, label: "Analisis Demografi", size: "w-[28px]" },
  { icon: FaSquarePollVertical, label: "Electoral Vote", size: "w-[24.5px]" },
];

function Sidebar() {
  return (
    <nav className="w-[460px] shrink-0 bg-[#303c4d]">
      {NAV.map(({ icon: Icon, label, size, active }) => (
        <div key={label} className={`flex h-[88px] items-center pl-[30px] text-[28px] ${active ? "bg-[#222b35] text-[#5ab99d]" : "text-white"}`}>
          <Icon className={`h-7 shrink-0 ${size}`} />
          <span className="ml-[7px] whitespace-pre">{label}</span>
        </div>
      ))}
    </nav>
  );
}

const STATS = [
  { value: "96", lines: ["Responden Berasal Dari Purwodadi"], icon: FaLocationDot, size: "w-[105px]" },
  { value: "17 Tahun", lines: ["Usia Responden Terbanyak"], icon: FaUsers, size: "w-[175px]" },
  { value: "64.84 %", lines: ["Persentase Responden Jenis", "Kelamin Perempuan"], icon: FaVenusMars, size: "w-[175px]" },
  { value: "32.48 %", lines: ["Persentase Pekerjaan Orang Tua", "Responden sebagai Buruh"], icon: FaBriefcase, size: "w-[140px]" },
];

function StatColumn() {
  return (
    <div className="flex h-[1100px] w-[545px] flex-col gap-10 rounded-[8px] border-2 border-[#e3e3e3] bg-[#f5f5f5] px-2 pt-[38px] shadow-[inset_0_2px_2px_rgba(0,0,0,0.05)]">
      {STATS.map(({ value, lines, icon: Icon, size }) => (
        <div key={value} className="relative shrink-0 bg-[#081e3c] px-5 pb-[22px] pt-[18px] text-white">
          <div className="mb-5 text-[76px] font-bold leading-[83.4px]">{value}</div>
          <div className="mb-5 text-[30px] leading-[42.8px]">
            {lines.map((l) => (
              <div key={l} className="whitespace-nowrap">
                {l}
              </div>
            ))}
          </div>
          <Icon className={`absolute bottom-[45px] right-[10px] h-[140px] text-black/15 ${size}`} />
        </div>
      ))}
    </div>
  );
}

function InfoBox() {
  return (
    <section className="h-[293px] border-2 border-t-0 border-[#303c4d] bg-[#081e3c] text-white">
      <header className="flex h-[85px] items-start justify-between bg-[#303c4d] pl-5 pr-[31px]">
        <h1 className="pt-[19px] text-[38px] leading-[44px] text-[#f4f4f4]">Peta Preferensi Pemilih Pemula Kabupaten Purworejo</h1>
        <span className="mt-[37px] h-[3px] w-[19px] rounded-full bg-white" />
      </header>
      <p className="whitespace-nowrap pl-[60px] pt-[58px] text-[30px] leading-[43px]">
        Pada menu ini anda akan melihat bagaimana visualisasi hasil pemetaan preferensi pemilih pemula di Kabupaten Purworejo beserta beberapa informasi dan grafik yang
        <br />
        menunjang detail visualisasi
      </p>
    </section>
  );
}

export default function App() {
  return (
    <div className="h-[1886px] w-[3104px] overflow-hidden bg-white px-[112px] pt-[76px] font-['Inter',sans-serif]">
      <div className="rounded-[20px] shadow-[0_0_0_1px_rgba(0,0,0,0.18),0_0_3px_rgba(0,0,0,0.3),0_36px_90px_rgba(0,0,0,0.42)]">
        <div className="flex h-[1662px] w-[2880px] flex-col overflow-hidden rounded-[20px] bg-white">
          <TabBar />
          <Toolbar />
          <div className="flex h-[100px] shrink-0 items-center bg-[#5ab99d]">
            <div className="flex-1 pl-[1152px]">
              <span className="inline-block whitespace-nowrap pt-[2px] text-[39px] font-extralight tracking-[-1.6px] text-white">Mapilu Purworejo</span>
            </div>
            <div className="mr-[234px] flex w-[25px] flex-col gap-[3px]">
              <span className="h-[5px] rounded-[1px] bg-[#2c3e50]" />
              <span className="h-[5px] rounded-[1px] bg-[#2c3e50]" />
              <span className="h-[5px] rounded-[1px] bg-[#2c3e50]" />
            </div>
          </div>
          <div className="flex flex-1 overflow-hidden font-['Liberation_Sans',Arial,sans-serif]">
            <Sidebar />
            <main className="flex-1 px-[30px] pt-[30px]">
              <InfoBox />
              <div className="mt-10 flex justify-between">
                <StatColumn />
                <div className="relative h-[1037px] w-[1754px]">
                  <BaseMap />
                  <MapControls />
                </div>
              </div>
            </main>
          </div>
        </div>
      </div>
    </div>
  );
}
